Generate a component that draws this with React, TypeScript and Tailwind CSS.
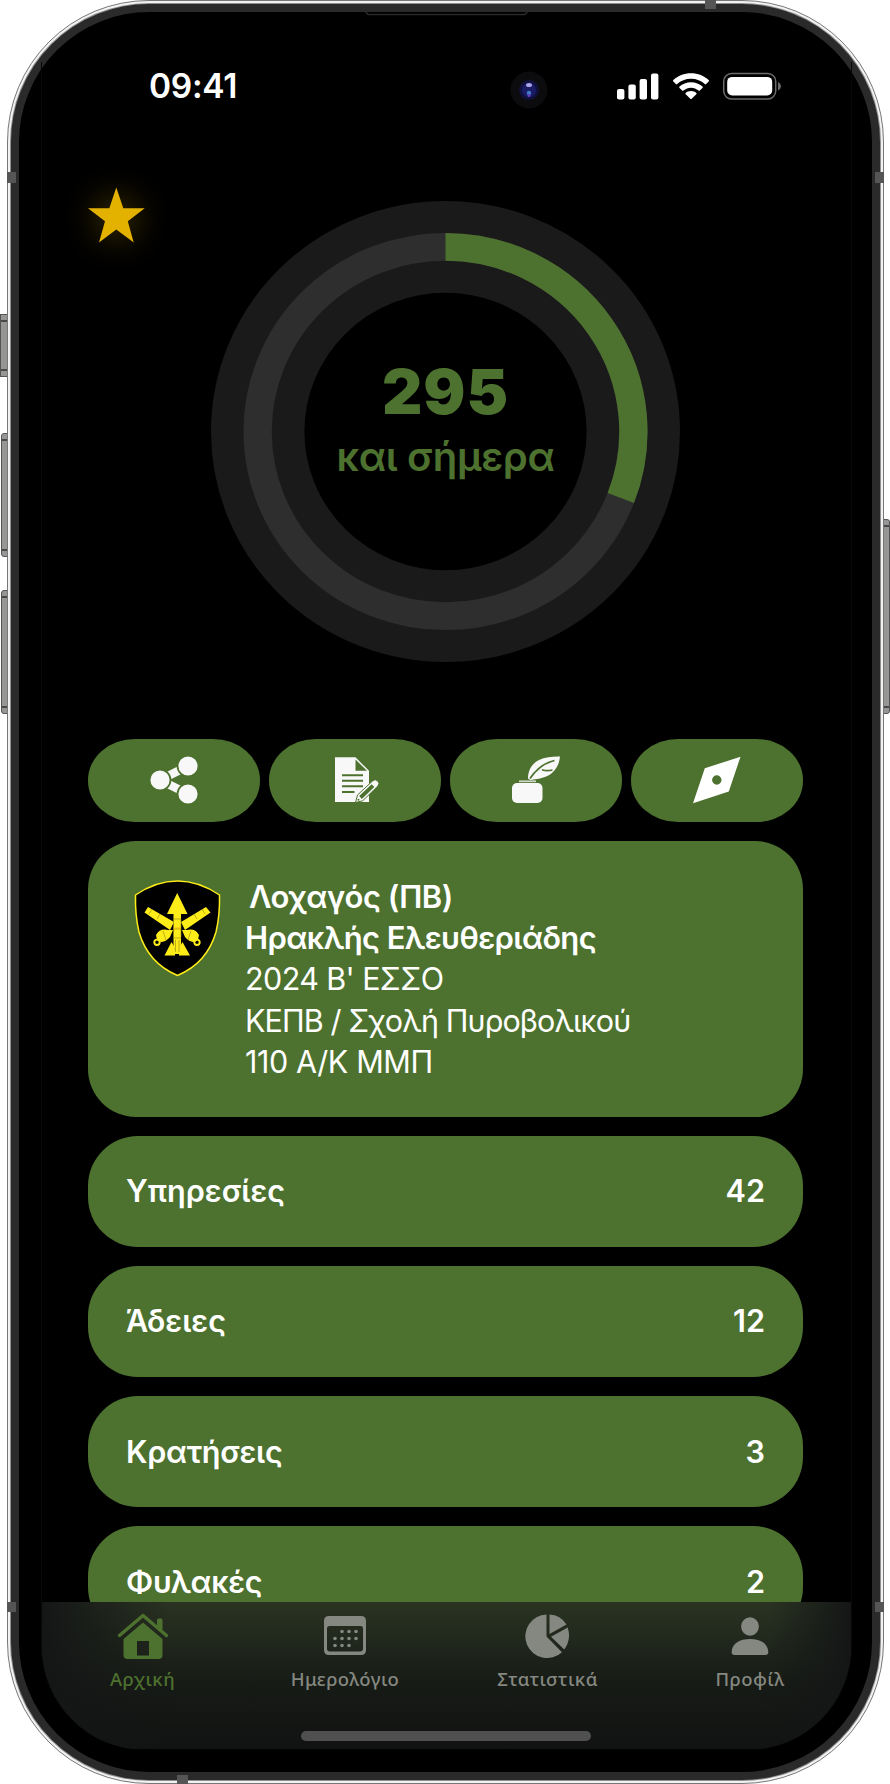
import React from "react";

const GREEN = "#4d712e";

function StatusBar() {
  return (
    <div className="flex h-[51px] shrink-0 items-center pb-[4px] pl-[107px] pr-[69px]">
      <span className="w-[320px] pt-[3px] text-[33.500px] font-semibold leading-none tracking-[-0.300px] text-white">09:41</span>
      <svg className="ml-[41px] mt-[8px] size-[38px]" viewBox="0 0 38 38">
        <circle cx="19" cy="19" r="18.500" fill="#0c0c0e" />
        <circle cx="19" cy="19" r="10" fill="#10103c" />
        <circle cx="19" cy="19" r="7" fill="#1b1b66" />
        <ellipse cx="19" cy="14" rx="3" ry="2" fill="#a9a4e8" />
        <circle cx="19" cy="22" r="2.200" fill="#3f7cc4" />
        <circle cx="19" cy="24.500" r="1.500" fill="#6a3cc0" />
      </svg>
      <svg className="ml-auto h-[28px] w-[166px]" viewBox="0 0 166 28">
        <g fill="#fff">
          <rect x="1" y="17" width="7.400" height="10.500" rx="2" />
          <rect x="12.400" y="12.500" width="7.400" height="15" rx="2" />
          <rect x="23.600" y="7" width="7.400" height="20.500" rx="2" />
          <rect x="35" y="1.500" width="7.400" height="26" rx="2" />
          <path d="M75 1.300c7 0 13 2.500 17.700 6.800q.7.700 0 1.400l-2.600 2.600q-.6.600-1.300 0C85.200 8.700 80.500 6.700 75 6.700S64.800 8.700 61.200 12.100q-.7.600-1.300 0l-2.600-2.600q-.7-.7 0-1.400C62 3.800 68 1.300 75 1.300z" />
          <path d="M75 10.200c4.500 0 8.400 1.700 11.500 4.400q.7.700 0 1.400l-2.700 2.600q-.6.600-1.300 0c-2.100-1.800-4.600-2.900-7.500-2.900s-5.400 1.100-7.500 2.900q-.7.600-1.300 0L63.500 16q-.7-.7 0-1.400c3.100-2.700 7-4.400 11.500-4.400z" />
          <path d="M75 19c2.100 0 3.900.7 5.300 1.900q.7.600 0 1.300L75.700 26.800q-.7.600-1.400 0l-4.600-4.600q-.7-.7 0-1.300C71.100 19.700 72.900 19 75 19z" />
          <rect x="111.200" y="4.900" width="45" height="18.600" rx="5" />
        </g>
        <rect x="107.700" y="1.400" width="52" height="25.600" rx="8" fill="none" stroke="#6f6b6b" strokeWidth="1.500" />
        <path d="M162 10q3 1.500 3 4.200T162 18.400z" fill="#6f6b6b" />
      </svg>
    </div>
  );
}

function ProgressRing() {
  const a = (111.1 * Math.PI) / 180;
  const r = 187.9;
  return (
    <div className="grid h-[461px] w-[469px] shrink-0 place-items-center">
      <svg className="col-start-1 row-start-1 h-[461px] w-[469px]" viewBox="-234.500 -234.500 469 469" preserveAspectRatio="none">
        <circle r="187.800" fill="none" stroke="#1a1a1a" strokeWidth="93.400" />
        <circle r={r} fill="none" stroke="#2e2e2e" strokeWidth="28.300" />
        <path d={`M0 ${-r}A${r} ${r} 0 0 1 ${r * Math.sin(a)} ${-r * Math.cos(a)}`} fill="none" stroke={GREEN} strokeWidth="28.300" />
      </svg>
      <div className="col-start-1 row-start-1 flex flex-col items-center pb-[13px] text-[#4d712e]">
        <span className="text-[62.500px] font-black leading-[62px] tracking-[1px]">295</span>
        <span className="mt-[2px] text-[40px] font-semibold leading-[66px] tracking-[-0.350px]">και σήμερα</span>
      </div>
    </div>
  );
}

function ShareIcon() {
  return (
    <svg className="size-[48px]" viewBox="0 0 48 48">
      <path d="M10 24 38 10M10 24 38 38" stroke="#f8f8f8" strokeWidth="8.500" />
      <g fill="#f8f8f8" stroke={GREEN} strokeWidth="1.800">
        <circle cx="10" cy="24" r="10.500" />
        <circle cx="38" cy="10" r="10.500" />
        <circle cx="38" cy="38" r="10.500" />
      </g>
    </svg>
  );
}

function NoteIcon() {
  return (
    <svg className="size-[48px]" viewBox="0 0 48 48">
      <path d="M4 1.300h20.500L38 14.800V46H4z" fill="#f8f8f8" />
      <path d="M24.500 3.500V14.800H36z" fill={GREEN} />
      <path d="M11 19.300h21M11 24.800h21M11 30.300h21M11 36h12.500" stroke={GREEN} strokeWidth="1.900" />
      <path d="M24.500 46.500 26.500 39 41.500 25a3.600 3.600 0 0 1 5.200 5.200L31.700 44.800z" fill="#f8f8f8" stroke={GREEN} strokeWidth="1" />
      <path d="M29.500 41.500 42 29.700" stroke={GREEN} strokeWidth="3.800" />
      <circle cx="27.500" cy="43.800" r="1" fill={GREEN} />
    </svg>
  );
}

function QuillIcon() {
  return (
    <svg className="size-[48px]" viewBox="0 0 48 48">
      <rect x="0" y="27" width="30.500" height="20" rx="5" fill="#f8f8f8" />
      <path d="M7 25.300h17" stroke="#cfd8c8" strokeWidth="1.800" />
      <path d="M16 22.500C16 14 20 7.500 27 4 33 1 41 .5 48 .6 47.500 7 45 12.500 40 17c-6 5-13 5.500-19.500 6.800L18 24z" fill="#f8f8f8" />
      <path d="M18 22.500C24 13.500 32 7 42.500 4.500M30 13.700c4 1.500 7.500 1 10.500.3" fill="none" stroke={GREEN} strokeWidth="1.700" />
    </svg>
  );
}

function NeedleIcon() {
  return (
    <svg className="size-[48px]" viewBox="0 0 48 48">
      <path fillRule="evenodd" d="M47.500 .7 35.800 35.500 0 47.300 11.800 12.300zM23.800 19.300a4.700 4.700 0 1 0 0 9.400 4.700 4.700 0 0 0 0-9.400z" fill="#fff" />
    </svg>
  );
}

function Emblem() {
  return (
    <svg className="h-[97px] w-[87px] shrink-0" viewBox="0 0 87 97">
      <path d="M43.500 1Q65 1 85.500 15q.5 20-3.500 37Q73 83 43.500 95.500 14 83 5 52 1 35 1.500 15 22 1 43.500 1z" fill="#000" stroke="#ffed1a" strokeWidth="1.500" />
      <g fill="#ffed1a">
        <path d="M14 27 40 42l-4 8L10.500 32.500zM72 27 47 42l4 8 25.500-17.500z" />
        <path d="M39 50 36 57q-7 8-13 3l-1-5q4-7 12-5zM48 50l3 7q7 8 13 3l1-5q-4-7-12-5z" />
        <path d="M43.200 13 53.500 34H47v30l-1.500 10H41l-1.500-10V34H33z" />
        <path d="M37.500 62 40 66l1 5v4.500H30.500zM48.500 62 46 66l-1 5v4.500h11z" />
      </g>
      <g fill="none" stroke="#ffed1a" strokeWidth="1.900"><circle cx="23" cy="62.300" r="2.700" /><circle cx="63" cy="62.300" r="2.700" /></g>
      <g fill="none" stroke="#8f8512" strokeWidth=".6">
        <path d="M39.500 39h7.500M39.500 49h7.500M39.500 58h7.500M39.500 39v18M47 39v18M41.500 60v12M45 60v12M18 29l-3 5M26 34l-3 5M68 29l3 5M60 34l3 5M29 51l3 9M57 51l-3 9" />
        <path d="M39.500 48h7.500" stroke="#f39a1a" />
      </g>
    </svg>
  );
}

const actions = [ShareIcon, NoteIcon, QuillIcon, NeedleIcon];
const rows = [
  { label: "Υπηρεσίες", value: 42 },
  { label: "Άδειες", value: 12 },
  { label: "Κρατήσεις", value: 3 },
  { label: "Φυλακές", value: 2 },
];

function HomeIcon() {
  return (
    <svg className="h-[46px] w-[52px]" viewBox="0 0 52 46" fill={GREEN}>
      <path d="M2.500 22.500 26 2.500 49.500 22.500" fill="none" stroke={GREEN} strokeWidth="3.400" strokeLinecap="round" strokeLinejoin="round" />
      <path d="M40 7q0-1.500 1.500-1.500h2.500q1.500 0 1.500 1.500v11L40 13.500z" />
      <path fillRule="evenodd" d="M26 9.500 45.500 26v16q0 4-4 4h-31q-4 0-4-4V26zM20 28v14.500h12V28z" />
    </svg>
  );
}

function CalendarIcon() {
  const dots = [[19, 17], [26, 17], [33, 17], [12, 24], [19, 24], [26, 24], [33, 24], [12, 31], [19, 31], [26, 31]];
  return (
    <svg className="h-[46px] w-[44px]" viewBox="0 0 44 46" fill="#858880">
      <path fillRule="evenodd" d="M6 3h32q5 0 5 5v29q0 5-5 5H6q-5 0-5-5V8q0-5 5-5zM6.500 13Q4 13 4 15.500v20Q4 38.500 7 38.500h30q3 0 3-3v-20Q40 13 37.500 13z" />
      {dots.map(([x, y]) => <circle key={`${x}-${y}`} cx={x} cy={y + 1.5} r="1.800" />)}
    </svg>
  );
}

function ChartIcon() {
  return (
    <svg className="h-[46px] w-[46px]" viewBox="0 0 46 46" fill="#858880">
      <path d="M21.500 1.500v22L37 39.200A21.800 21.800 0 1 1 21.500 1.500z" />
      <path d="M24.500 1.500Q35.500 2 41.500 11.500L24.500 21zM42.700 14.500Q46.500 26.500 39.300 36.500L26 23.700z" />
    </svg>
  );
}

function ProfileIcon() {
  return (
    <svg className="h-[46px] w-[38px]" viewBox="0 0 38 46" fill="#858880">
      <ellipse cx="19" cy="13.500" rx="8.900" ry="9.300" />
      <path d="M.7 39C1 30 9 26 19 26s18 4 18.300 13q.2 3-3 3H3.700q-3.200 0-3-3z" />
    </svg>
  );
}

const tabs = [
  { label: "Αρχική", Icon: HomeIcon, cls: "text-[#4d712e]" },
  { label: "Ημερολόγιο", Icon: CalendarIcon, cls: "text-[#858880]" },
  { label: "Στατιστικά", Icon: ChartIcon, cls: "text-[#858880]" },
  { label: "Προφίλ", Icon: ProfileIcon, cls: "text-[#858880]" },
];

function SideButton({ cls }: { cls: string }) {
  return (
    <div className={`absolute border border-[#555] bg-[#969795] py-[5px] ${cls}`}>
      <div className="h-full border-y-2 border-[#4a4a4a]" />
    </div>
  );
}

export default function App() {
  return (
    <div className="relative h-[1784px] w-[890px] overflow-hidden bg-white pl-[7px] pr-[6px] font-['Inter','Liberation_Sans',sans-serif]">
      <SideButton cls="left-0 top-[314px] h-[63px] w-[8px]" />
      <SideButton cls="left-[1px] top-[433px] h-[124px] w-[8px] rounded-l-[3px]" />
      <SideButton cls="left-[1px] top-[590px] h-[124px] w-[8px] rounded-l-[3px]" />
      <SideButton cls="right-0 top-[519px] h-[195px] w-[8px] rounded-r-[3px]" />
      <div className="relative h-[1784px] rounded-[142px] border border-[#777] bg-[#f2f2f2] p-[3px]">
        <div className="h-full rounded-[138px] border-[8px] border-[#2a2a2a] bg-black pl-[22px] pr-[20px] pt-[50px] shadow-[0_0_0_1px_#8e8e8e]">
          <div className="flex h-[1688px] flex-col overflow-hidden rounded-b-[104px] border-x border-[#08080a]">
            <StatusBar />
            <div className="flex h-[626px] shrink-0 justify-center pr-[2px] pt-[88px]">
              <ProgressRing />
            </div>
            <div className="flex flex-col gap-[19px] pl-[46px] pr-[48px]">
              <div className="grid h-[82.500px] grid-cols-4 gap-[9.600px]">
                {actions.map((Icon, i) => (
                  <div key={i} className="flex items-center justify-center rounded-[47px/41px] bg-[#4d712e]"><Icon /></div>
                ))}
              </div>
              <div className="flex h-[276px] items-start rounded-[48px] bg-[#4d712e] pl-[45.500px] pt-[39px]">
                <Emblem />
                <div className="ml-[24.500px] mt-[-4px] whitespace-nowrap text-[31px] leading-[41.400px] text-white">
                  <p className="pl-[4px] font-semibold tracking-[-0.500px]">Λοχαγός (ΠΒ)</p>
                  <p className="font-semibold tracking-[-0.640px]">Ηρακλής Ελευθεριάδης</p>
                  <p className="text-[30.500px] font-normal tracking-[-0.600px]">2024 Β' ΕΣΣΟ</p>
                  <p className="text-[30.500px] font-normal tracking-[-0.900px]">ΚΕΠΒ / Σχολή Πυροβολικού</p>
                  <p className="text-[30.500px] font-normal tracking-[-0.400px]">110 Α/Κ ΜΜΠ</p>
                </div>
              </div>
              {rows.map((r) => (
                <div key={r.label} className="flex h-[111.200px] shrink-0 items-center justify-between rounded-[50px] bg-[#4d712e] px-[38px] text-[30.600px] font-semibold text-white">
                  <span className={r.value < 10 ? "tracking-[-0.300px]" : ""}>{r.label}</span>
                  <span>{r.value}</span>
                </div>
              ))}
            </div>
            <div className="relative z-10 mt-[-35px] h-[147px] shrink-0 bg-[linear-gradient(90deg,#141616,#14161600_16%,#14161600_90%,#141616),linear-gradient(180deg,#2a3322,#171b16_55%,#111212)]">
              <div className="flex justify-between pl-[45.500px] pr-[46px] pt-[11px]">
                {tabs.map(({ label, Icon, cls }) => (
                  <div key={label} className={`flex w-[110px] flex-col items-center ${cls}`}>
                    <Icon />
                    <span className="mt-[6px] whitespace-nowrap font-['Noto_Sans',sans-serif] text-[18.500px] font-medium leading-[28px] tracking-[0.450px]">{label}</span>
                  </div>
                ))}
              </div>
              <div className="ml-[259px] mt-[38px] h-[10px] w-[290px] rounded-full bg-[#505050]" />
            </div>
          </div>
        </div>
      </div>
      <svg className="absolute left-[86px] top-[186px] size-[60px] overflow-visible drop-shadow-[0_0_16px_rgba(227,178,0,0.350)]" viewBox="0 0 60 60">
        <path d="M30.300 1.500 37.300 22.300H58.700L41.800 35.300 47.700 56.500 30.300 43.500 13 56.500 19 35.300 2 22.300H23.300z" fill="#e3b200" />
      </svg>
      <svg className="absolute left-[365px] top-[11px] h-[5px] w-[163px]" viewBox="0 0 163 5">
        <path d="M0 0 3 3.500H160L163 0" fill="none" stroke="#26282a" strokeWidth="1.500" />
      </svg>
      <div className="absolute left-[7px] top-[172px] h-[11px] w-[9px] bg-[#555]" />
      <div className="absolute right-[6px] top-[172px] h-[11px] w-[9px] bg-[#555]" />
      <div className="absolute left-[7px] top-[1602px] h-[10px] w-[9px] bg-[#555]" />
      <div className="absolute right-[6px] top-[1602px] h-[10px] w-[9px] bg-[#555]" />
      <div className="absolute left-[705px] top-0 h-[9px] w-[11px] bg-[#555]" />
      <div className="absolute bottom-0 left-[177px] h-[9px] w-[11px] bg-[#555]" />
    </div>
  );
}
